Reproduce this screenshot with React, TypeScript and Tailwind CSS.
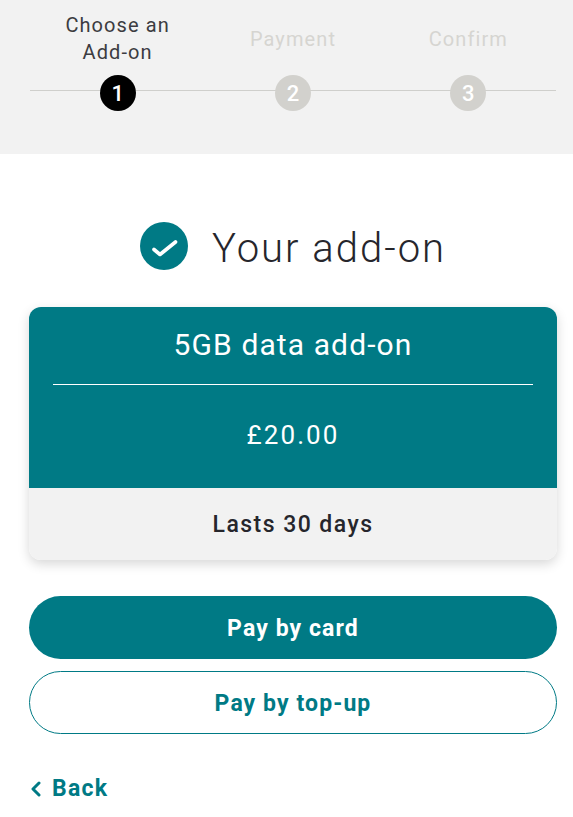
import React from 'react';

const steps = [
  { label: ['Choose an', 'Add-on'], active: true },
  { label: ['Payment'], active: false },
  { label: ['Confirm'], active: false },
];

export default function App() {
  return (
    <div className="min-h-[817px] bg-white font-['Roboto',sans-serif] overflow-hidden">
      {/* stepper */}
      <div className="h-[154px] bg-[#f2f2f2] pl-[30px] pr-[17px] pt-[12px]">
        <div className="relative grid grid-cols-3 h-[99px]">
          <div className="absolute left-0 right-0 top-[78px] h-px bg-[#cfcfcc]" />
          {steps.map((s, i) => (
            <div key={i} className="relative flex flex-col items-center">
              <div className={`h-[54px] mb-[9px] flex flex-col justify-center text-center text-[20px] leading-[27px] tracking-[1.1px] ${s.active ? 'text-[#3c3c41]' : 'text-[#d6d5d1]'}`}>
                {s.label.map((l) => (
                  <div key={l}>{l}</div>
                ))}
              </div>
              <div className={`w-[36px] h-[36px] rounded-full flex items-center justify-center text-white text-[22px] font-medium ${s.active ? 'bg-black' : 'bg-[#d2d1cd]'}`}>
                {i + 1}
              </div>
            </div>
          ))}
        </div>
      </div>

      <div className="pl-[29px] pr-[16px]">
        {/* heading */}
        <div className="flex items-center justify-center gap-[24px] h-[48px] mt-[68px] mb-[37px]">
          <div className="w-[48px] h-[48px] rounded-full bg-[#007a85] flex items-center justify-center">
            <svg width="48" height="48" viewBox="0 0 48 48" fill="none">
              <path d="M14 27.5 L20 32.5 L35.5 20" stroke="#fff" strokeWidth="3.6" strokeLinecap="round" strokeLinejoin="round" />
            </svg>
          </div>
          <h1 className="text-[40px] leading-[49px] tracking-[2px] text-[#26262c] font-light translate-y-[2px]">Your add-on</h1>
        </div>

        {/* card */}
        <div className="rounded-[12px] overflow-hidden shadow-[0_4px_12px_rgba(0,0,0,0.16)]">
          <div className="bg-[#007a85] h-[181px] px-[24px] flex flex-col text-white">
            <div className="h-[78px] pb-[2px] border-b border-white flex items-center justify-center text-[30px] tracking-[1.1px]">5GB data add-on</div>
            <div className="flex-1 pb-[2px] flex items-center justify-center text-[26px] tracking-[2.1px]">£20.00</div>
          </div>
          <div className="bg-[#f2f2f2] h-[72px] pt-[2px] flex items-center justify-center text-[23px] font-medium tracking-[1.45px] text-[#26262c]">Lasts 30 days</div>
        </div>

        {/* actions */}
        <button className="mt-[36px] w-full h-[63px] pt-[4px] rounded-full bg-[#007a85] text-white text-[23px] font-bold tracking-[1.1px]">Pay by card</button>
        <button className="mt-[12px] w-full h-[63px] pt-[4px] rounded-full border border-[#007a85] bg-white text-[#007a85] text-[23px] font-bold tracking-[1.1px]">Pay by top-up</button>

        <div className="mt-[38px] flex items-center gap-[11px] pl-[2px] text-[#007a85] text-[23px] font-bold tracking-[1.25px] leading-[30px] h-[34px]">
          <svg width="10" height="16" viewBox="0 0 10 16" fill="none">
            <path d="M8 2 L2 8 L8 14" stroke="#007a85" strokeWidth="3" strokeLinecap="round" strokeLinejoin="round" />
          </svg>
          Back
        </div>
      </div>
    </div>
  );
}
